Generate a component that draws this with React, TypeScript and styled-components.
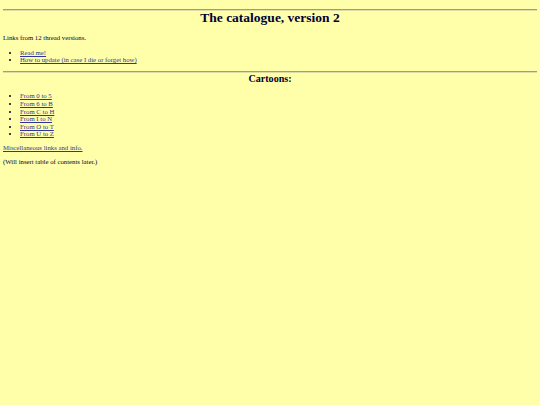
import React from "react";
import styled, { createGlobalStyle } from "styled-components";

const GlobalStyle = createGlobalStyle`
  html, body {
    margin: 0;
    padding: 0;
    background: #ffffaa;
  }
  body {
    font-family: "Liberation Serif", "Times New Roman", serif;
    color: #000033;
  }
`;

const Page = styled.div`
  min-height: 405px;
  padding: 0 3px;
  font-size: 6.75px;
  line-height: 7.6px;
`;

const Rule = styled.hr<{ $top: number }>`
  margin: ${(p) => p.$top}px 0 0;
  height: 0;
  border: 0;
  border-top: 1px solid #9e9e7a;
  border-bottom: 1px solid #dcdca4;
`;

const Title = styled.h1`
  margin: 1px 0 0;
  font-size: 13.5px;
  line-height: 12px;
  font-weight: bold;
  text-align: center;
`;

const Section = styled.h2`
  margin: 1px 0 0;
  font-size: 10.1px;
  line-height: 10px;
  font-weight: bold;
  text-align: center;
`;

const Para = styled.p<{ $top: number }>`
  margin: ${(p) => p.$top}px 0 0;
`;

const List = styled.ul<{ $top: number }>`
  margin: ${(p) => p.$top}px 0 0;
  padding-left: 17px;
  list-style: disc;
`;

const Link = styled.a`
  color: #333399;
  text-decoration: underline;
`;

const intro = ["Read me!", "How to update (in case I die or forget how)"];
const ranges = [
  "From 0 to 5",
  "From 6 to B",
  "From C to H",
  "From I to N",
  "From O to T",
  "From U to Z",
];

export default function App() {
  return (
    <>
      <GlobalStyle />
      <Page>
        <Rule $top={9} />
        <Title>The catalogue, version 2</Title>
        <Para $top={10.4}>Links from 12 thread versions.</Para>
        <List $top={6.9}>
          {intro.map((t) => (
            <li key={t}>
              <Link href="#">{t}</Link>
            </li>
          ))}
        </List>
        <Rule $top={6.9} />
        <Section>Cartoons:</Section>
        <List $top={8.4}>
          {ranges.map((t) => (
            <li key={t}>
              <Link href="#">{t}</Link>
            </li>
          ))}
        </List>
        <Para $top={6.4}>
          <Link href="#">Miscellaneous links and info.</Link>
        </Para>
        <Para $top={6.4}>(Will insert table of contents later.)</Para>
      </Page>
    </>
  );
}
